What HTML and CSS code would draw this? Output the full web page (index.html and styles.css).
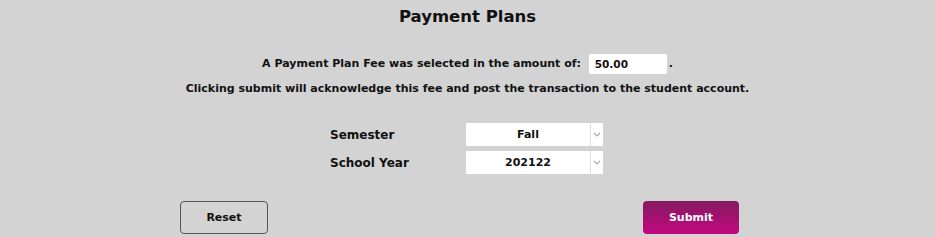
FILE: index.html
```html
<!DOCTYPE html>
<html lang="en">
<head>
  <meta charset="UTF-8">
  <title>Payment Plans</title>
  <link rel="stylesheet" href="styles.css">
</head>
<body>
  <div class="page">
    <h1 class="title">Payment Plans</h1>
    <div class="notice">
      <p class="line">A Payment Plan Fee was selected in the amount of:
        <input class="amount" type="text" value="50.00" readonly>.
      </p>
      <p class="line">Clicking submit will acknowledge this fee and post the transaction to the student account.</p>
    </div>
    <div class="form">
      <div class="row">
        <label class="label">Semester</label>
        <div class="select">
          <span class="value">Fall</span>
          <span class="arrow"><svg width="8" height="5" viewBox="0 0 8 5"><path d="M1 1l3 3 3-3" fill="none" stroke="#aaa" stroke-width="1.2"/></svg></span>
        </div>
      </div>
      <div class="row">
        <label class="label">School Year</label>
        <div class="select">
          <span class="value">202122</span>
          <span class="arrow"><svg width="8" height="5" viewBox="0 0 8 5"><path d="M1 1l3 3 3-3" fill="none" stroke="#aaa" stroke-width="1.2"/></svg></span>
        </div>
      </div>
    </div>
    <div class="buttons">
      <button class="btn reset">Reset</button>
      <button class="btn submit">Submit</button>
    </div>
  </div>
</body>
</html>
```

FILE: styles.css
```css
body {
  margin: 0;
  background-color: #d3d3d3;
  font-family: "DejaVu Sans", sans-serif;
  font-weight: bold;
  color: #111;
}

.page {
  width: 935px;
  display: flex;
  flex-direction: column;
  align-items: center;
}

.title {
  margin: 5px 0 0;
  font-size: 16.5px;
  line-height: 24px;
  font-weight: bold;
}

.notice {
  margin-top: 22px;
  text-align: center;
  font-size: 11px;
}
.line {
  margin: 0;
  line-height: 25px;
}
.amount {
  width: 72px;
  height: 20px;
  border: 0;
  padding: 0 0 0 6px;
  margin: 0 2px 0 4px;
  background: #fff;
  font-family: inherit;
  font-weight: bold;
  font-size: 10.5px;
  color: #111;
  vertical-align: middle;
}

.form {
  margin-top: 22px;
  margin-right: 2px;
  display: flex;
  flex-direction: column;
  gap: 5px;
}
.row {
  display: flex;
  align-items: center;
}
.label {
  width: 136px;
  font-size: 12px;
}
.select {
  display: flex;
  width: 137px;
  height: 23px;
  background: #fff;
}
.value {
  flex: 1;
  text-align: center;
  font-size: 11px;
  line-height: 24px;
}
.arrow {
  width: 12px;
  border-left: 1px solid #ddd;
  display: flex;
  align-items: center;
  justify-content: center;
}

.buttons {
  margin-top: 27px;
  margin-right: 16px;
  width: 559px;
  display: flex;
  justify-content: space-between;
}
.btn {
  height: 33px;
  border-radius: 4px;
  font-family: inherit;
  font-weight: bold;
  font-size: 11px;
  cursor: pointer;
}
.reset {
  width: 88px;
  border: 1px solid #555;
  background: #d3d3d3;
  color: #111;
}
.submit {
  width: 96px;
  border: 0;
  background: linear-gradient(#851a60, #c2087f);
  color: #fff;
}
```
